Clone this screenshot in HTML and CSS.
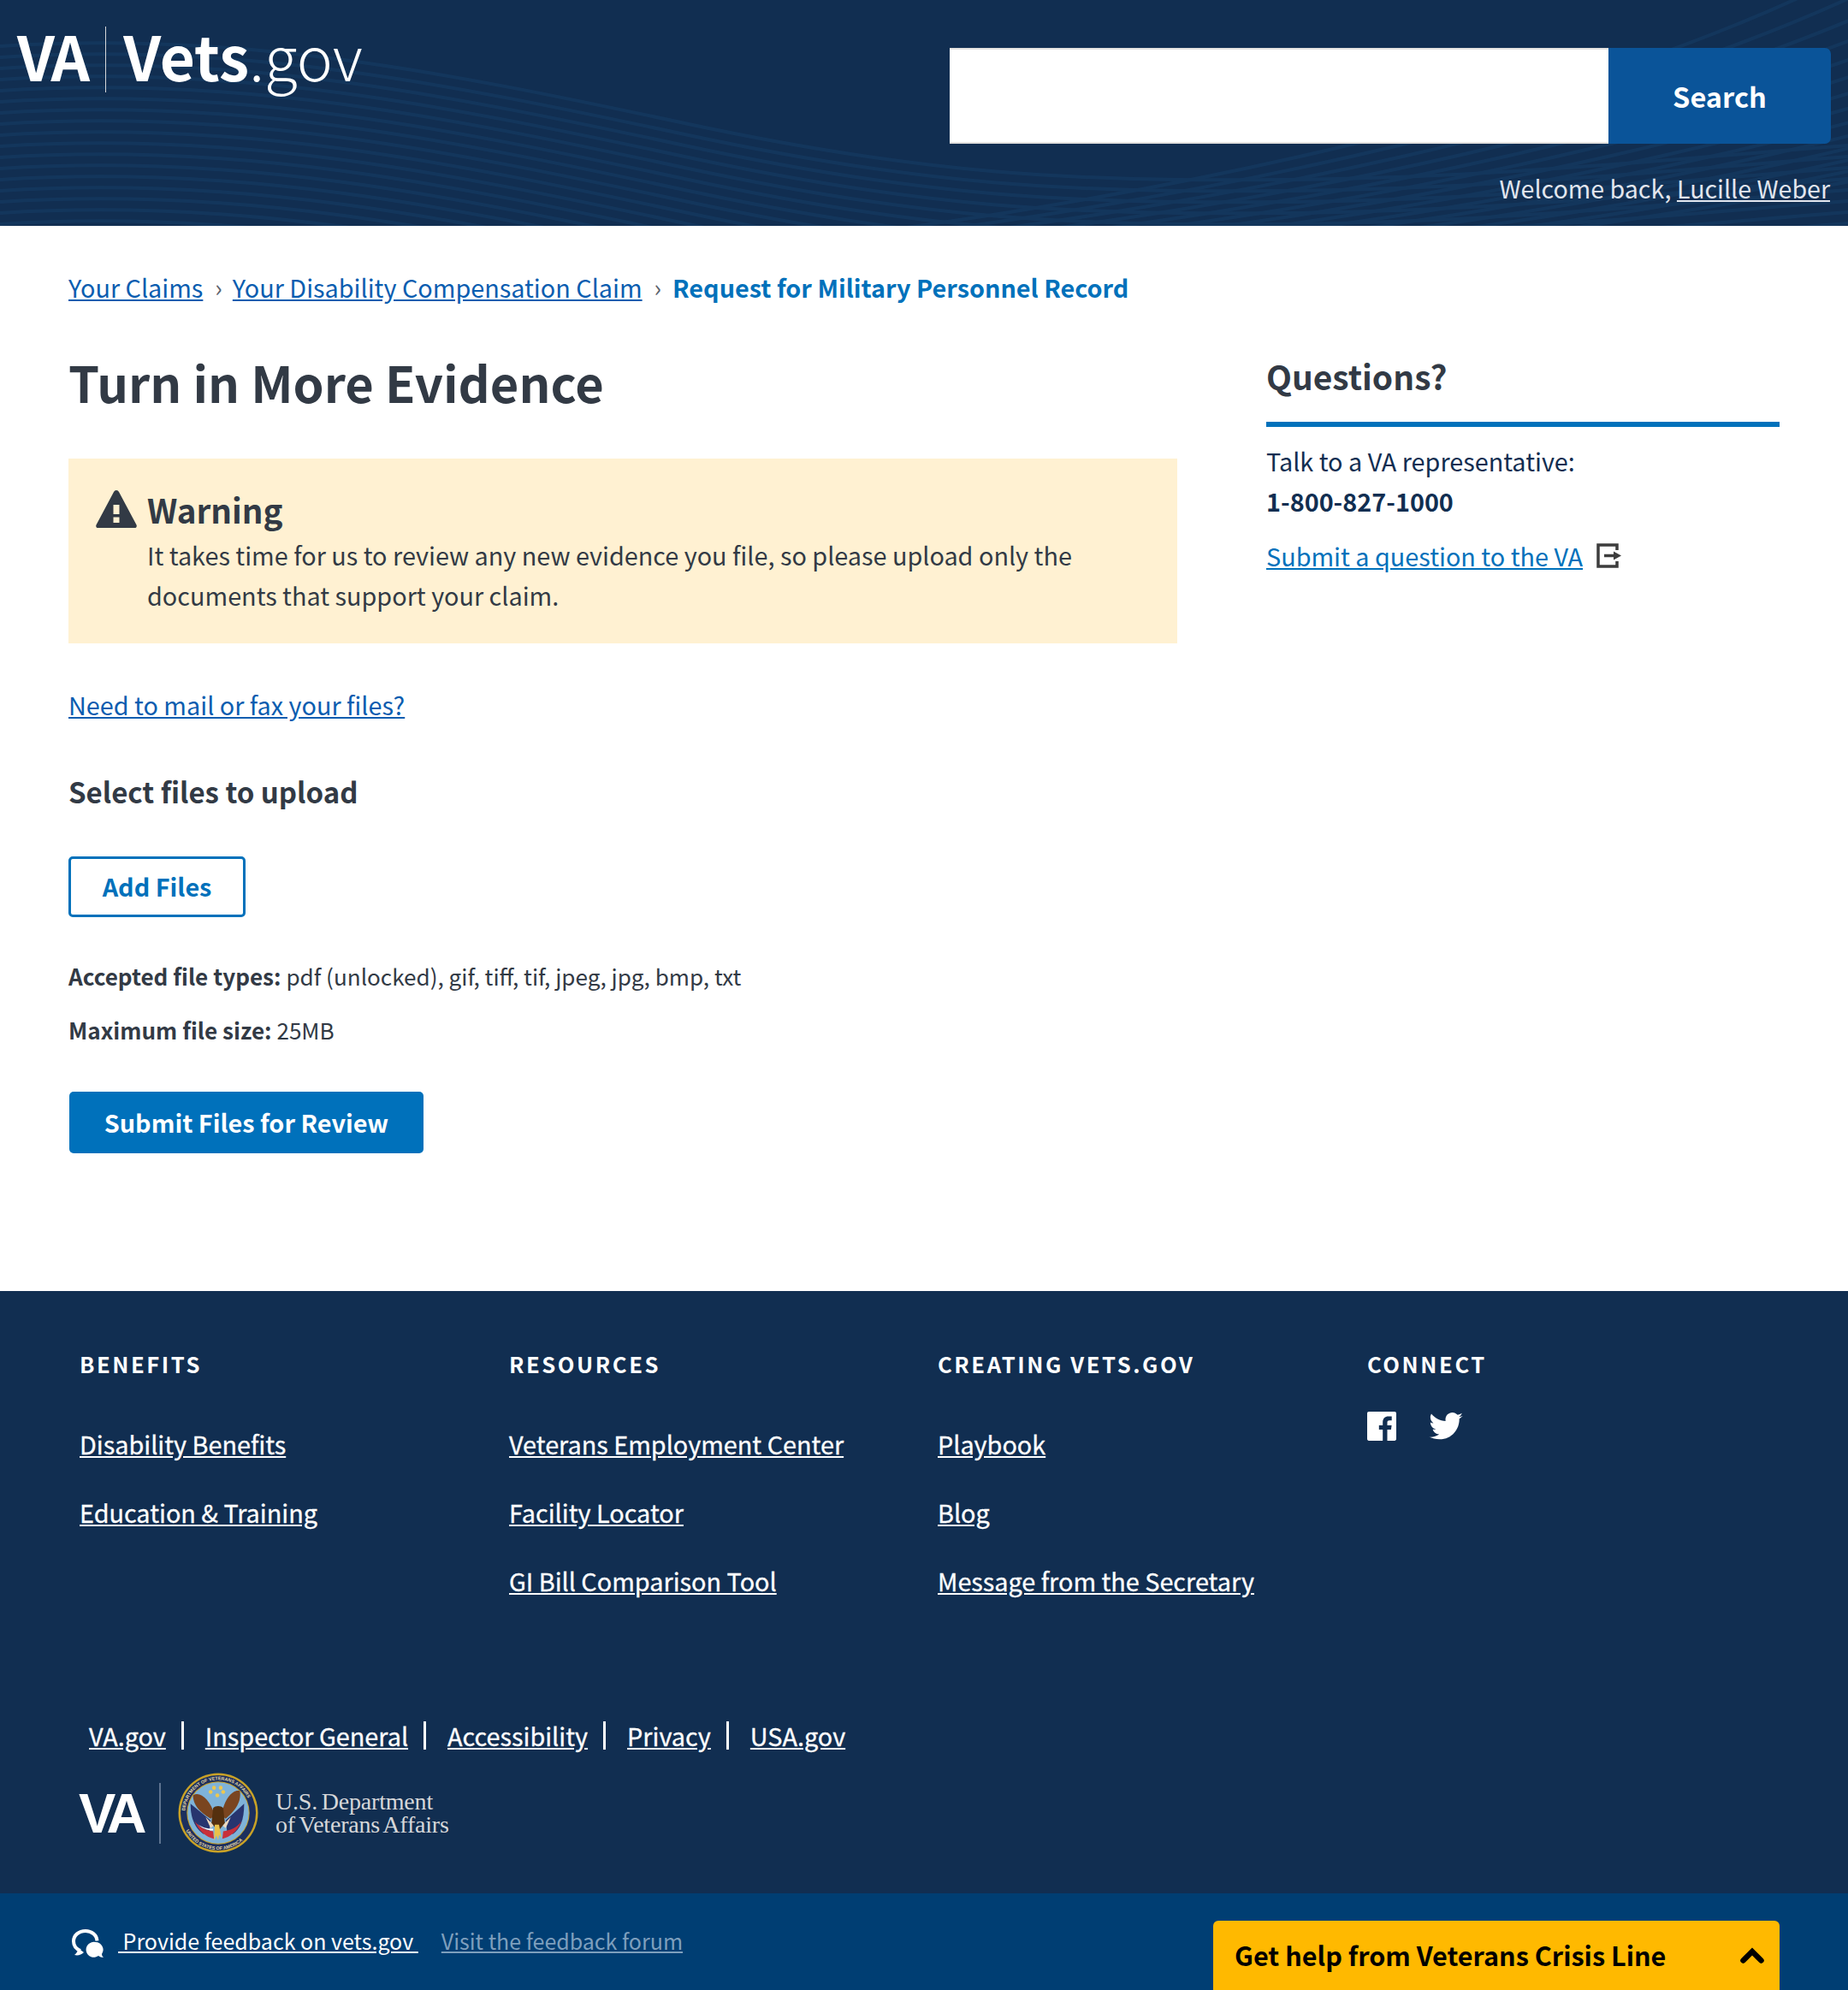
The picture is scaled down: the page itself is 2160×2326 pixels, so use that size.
FILE: index.html
```html
<!DOCTYPE html>
<html lang="en">
<head>
<meta charset="utf-8">
<title>Turn in More Evidence - Vets.gov</title>
<link rel="stylesheet" href="styles.css">
</head>
<body>
<header class="masthead">
  <svg class="waves" width="2160" height="264" viewBox="0 0 2160 264" aria-hidden="true">
    <defs>
      <path id="wave" d="M0 80C280 62 520 110 800 170S1250 238 1500 236 2000 208 2160 196"/>
      <path id="arc" d="M860 290C1250 250 1800 150 2160 -30"/>
    </defs>
    <g class="wave-lines">
      <use href="#wave"/><use href="#wave" y="13"/><use href="#wave" y="26"/><use href="#wave" y="39"/><use href="#wave" y="52"/><use href="#wave" y="65"/><use href="#wave" y="78"/><use href="#wave" y="91"/><use href="#wave" y="104"/><use href="#wave" y="117"/><use href="#wave" y="130"/><use href="#wave" y="143"/><use href="#wave" y="156"/><use href="#wave" y="169"/><use href="#wave" y="182"/><use href="#wave" y="-13"/><use href="#wave" y="-26"/>
      <use href="#arc"/><use href="#arc" x="60"/><use href="#arc" x="120"/><use href="#arc" x="180"/><use href="#arc" x="240"/><use href="#arc" x="300"/><use href="#arc" x="360"/><use href="#arc" x="420"/><use href="#arc" x="480"/><use href="#arc" x="540"/><use href="#arc" x="600"/><use href="#arc" x="660"/><use href="#arc" x="720"/><use href="#arc" x="780"/>
    </g>
  </svg>
  <a class="logo" href="#"><span class="logo-va">VA</span><span class="logo-rule"></span><span class="logo-vets">Vets</span><span class="logo-gov">.gov</span></a>
  <div class="masthead-right">
    <form class="search">
      <input class="search-input" type="text" aria-label="Search">
      <button class="search-button" type="button">Search</button>
    </form>
    <p class="welcome">Welcome back, <a href="#">Lucille Weber</a></p>
  </div>
</header>

<main class="page">
  <nav class="crumbs">
    <a href="#">Your Claims</a><span class="crumb-sep">›</span><a href="#">Your Disability Compensation Claim</a><span class="crumb-sep">›</span><a class="crumb-current" href="#">Request for Military Personnel Record</a>
  </nav>
  <div class="columns">
    <section class="content">
      <h1 class="title">Turn in More Evidence</h1>
      <div class="alert">
        <svg class="alert-icon" width="48" height="44" viewBox="0 0 48 44" aria-hidden="true"><path class="icon-dark" fill-rule="evenodd" d="M24 0c1.400 0 2.300.7 3 2l20.500 38.500c.8 1.600-.2 3.500-2 3.500H2.500c-1.800 0-2.800-1.900-2-3.500L21 2c.7-1.300 1.600-2 3-2zM20.500 17v11h7V17zm0 14.500V38h7v-6.500z"/></svg>
        <div class="alert-body">
          <h2 class="alert-title">Warning</h2>
          <p class="alert-text">It takes time for us to review any new evidence you file, so please upload only the documents that support your claim.</p>
        </div>
      </div>
      <p class="mail-link"><a href="#">Need to mail or fax your files?</a></p>
      <h3 class="upload-title">Select files to upload</h3>
      <button class="btn-outline" type="button">Add Files</button>
      <p class="file-note"><b>Accepted file types:</b> pdf (unlocked), gif, tiff, tif, jpeg, jpg, bmp, txt</p>
      <p class="file-note file-note-2"><b>Maximum file size:</b> 25MB</p>
      <button class="btn-primary" type="button">Submit Files for Review</button>
    </section>
    <aside class="side">
      <h4 class="side-title">Questions?</h4>
      <p class="side-text">Talk to a VA representative:</p>
      <p class="side-phone">1-800-827-1000</p>
      <p class="side-link"><a href="#">Submit a question to the VA</a>
        <svg class="ext-icon" width="29" height="29" viewBox="0 0 29 29" aria-hidden="true"><path class="ext-stroke" d="M24 8V2H2v25h22v-6M9 14.500h12"/><path class="ext-arrow" d="M20 9.500l9 5-9 5z"/></svg>
      </p>
    </aside>
  </div>
</main>

<footer class="footer">
  <div class="footer-grid">
    <div class="footer-col">
      <h5 class="footer-head">BENEFITS</h5>
      <a href="#">Disability Benefits</a>
      <a href="#">Education &amp; Training</a>
    </div>
    <div class="footer-col">
      <h5 class="footer-head">RESOURCES</h5>
      <a href="#">Veterans Employment Center</a>
      <a href="#">Facility Locator</a>
      <a href="#">GI Bill Comparison Tool</a>
    </div>
    <div class="footer-col">
      <h5 class="footer-head">CREATING VETS.GOV</h5>
      <a href="#">Playbook</a>
      <a href="#">Blog</a>
      <a href="#">Message from the Secretary</a>
    </div>
    <div class="footer-col">
      <h5 class="footer-head footer-head-connect">CONNECT</h5>
      <div class="social">
        <svg width="34" height="34" viewBox="0 0 34 34" aria-hidden="true"><path class="icon-white" d="M1.900 0h30.200C33.200 0 34 .8 34 1.900v30.200c0 1.100-.8 1.900-1.900 1.900h-8.600V21h4.400l.7-5.100h-5.100v-3.200c0-1.500.4-2.500 2.500-2.500h2.700V5.600c-.5-.1-2.100-.2-3.900-.2-3.900 0-6.600 2.400-6.600 6.800v3.700h-4.400V21h4.400v13H1.900C.8 34 0 33.200 0 32.100V1.900C0 .8.800 0 1.900 0z"/></svg>
        <svg class="twitter" width="40" height="33" viewBox="0 0 24 20" aria-hidden="true"><path class="icon-white" d="M24 2.400c-.9.400-1.800.7-2.800.8 1-.6 1.800-1.600 2.200-2.700-1 .6-2 1-3.100 1.200C19.300.7 18 0 16.600 0c-2.700 0-4.900 2.200-4.900 4.900 0 .4 0 .8.100 1.100C7.700 5.800 4.100 3.900 1.700.9c-.4.700-.7 1.600-.7 2.500 0 1.700.9 3.200 2.200 4.100-.8 0-1.600-.2-2.200-.6v.1c0 2.400 1.700 4.400 3.900 4.800-.4.100-.8.200-1.300.2-.3 0-.6 0-.9-.1.600 2 2.400 3.400 4.600 3.400-1.700 1.300-3.800 2.100-6.100 2.100-.4 0-.8 0-1.200-.1C2.200 18.200 4.800 19 7.500 19c9.100 0 14-7.500 14-14v-.6c1-.7 1.800-1.500 2.500-2z"/></svg>
      </div>
    </div>
  </div>
  <nav class="legal">
    <a href="#">VA.gov</a><span class="legal-bar"></span><a href="#">Inspector General</a><span class="legal-bar"></span><a href="#">Accessibility</a><span class="legal-bar"></span><a href="#">Privacy</a><span class="legal-bar"></span><a href="#">USA.gov</a>
  </nav>
  <div class="va-brand">
    <span class="brand-va">VA</span>
    <span class="brand-rule"></span>
    <svg class="seal" width="94" height="94" viewBox="0 0 96 96" aria-hidden="true">
      <defs><path id="ring-top" d="M8.500 48a39.500 39.500 0 0 1 79 0"/><path id="ring-bottom" d="M4 48a44 44 0 0 0 88 0"/></defs>
      <circle cx="48" cy="48" r="47.500" fill="#c9a227"/>
      <circle cx="48" cy="48" r="45" fill="#1c2f5e"/>
      <circle cx="48" cy="48" r="37.500" fill="#c9a227"/>
      <circle cx="48" cy="48" r="36.500" fill="#7fb3d9"/>
      <text class="seal-text"><textPath href="#ring-top" startOffset="2%">DEPARTMENT OF VETERANS AFFAIRS</textPath></text>
      <text class="seal-text"><textPath href="#ring-bottom" startOffset="16%">UNITED STATES OF AMERICA</textPath></text>
      <path fill="#27356f" d="M15 37l24 20-2 16-7 0c-8-6-15-16-15-36z"/>
      <path fill="#27356f" d="M79 37L57 57l2 16 7 0c8-6 13-16 13-36z"/>
      <path fill="#c8303a" d="M20 58c6 8 14 11 22 12l1 9c-9-2-18-9-23-21z"/>
      <path fill="#fff" d="M23 61c5 4 11 6 19 6v2c-7 0-14-3-19-8z"/>
      <path fill="#c8303a" d="M76 58c-6 8-14 11-22 12l-1 9c9-2 18-9 23-21z"/>
      <path fill="#ecd9c0" d="M33 53l10 10-4 3zM63 53L53 63l4 3z"/>
      <path fill="#7a4520" d="M18 27c8-5 20 4 26 24l-5 4c-9-6-21-14-21-28z"/>
      <path fill="#7a4520" d="M74 22c-7-3-19 8-22 29l5 4c9-8 19-18 17-33z"/>
      <path fill="#55300f" d="M42 42c3-3 9-3 12 0l2 18-8 10-8-10z"/>
      <path fill="#e9c24a" d="M44 62h5l3 16-3-4-1 7-2-6-3 6z"/>
      <circle cx="43" cy="18" r="2.300" fill="#eec84e"/><circle cx="51" cy="18" r="2.300" fill="#eec84e"/><circle cx="39" cy="23" r="2.300" fill="#eec84e"/><circle cx="54" cy="23" r="2.300" fill="#eec84e"/><circle cx="47" cy="27" r="2.300" fill="#eec84e"/>
    </svg>
    <span class="brand-name">U.S. Department<br>of Veterans Affairs</span>
  </div>
</footer>

<div class="feedback">
  <svg class="feedback-icon" width="38" height="34" viewBox="0 0 38 34" aria-hidden="true"><path class="feedback-ring" d="M29.500 13.500C29 6.500 23 2 16 2 8 2 2 7 2 14c0 5 3 9 8 11"/><path class="icon-white" d="M3 30c4 1 8 0 11-3l-7-5c0 3-1 6-4 8zM27.500 15a9 9 0 0 1 7.500 14c0 1.500.8 3 2 4-2.500 0-4.500-.8-6-2a9 9 0 1 1-3.500-16z"/></svg>
  <a class="feedback-main" href="#">&nbsp;Provide feedback on vets.gov&nbsp;</a>
  <a class="feedback-forum" href="#">Visit the feedback forum</a>
  <div class="crisis">
    <span class="crisis-text">Get help from Veterans Crisis Line</span>
    <svg class="crisis-chevron" width="28" height="19" viewBox="0 0 28 19" aria-hidden="true"><path d="M3.500 15.500L14 5l10.500 10.500"/></svg>
  </div>
</div>
</body>
</html>
```

FILE: styles.css
```css
* { box-sizing: border-box; }
html, body { margin: 0; padding: 0; }
body {
  font-family: "Noto Sans CJK SC", "Noto Sans", sans-serif;
  font-size: 28.800px;
  line-height: 47px;
  color: #323a45;
  background: #fff;
  width: 2160px;
  height: 2326px;
  overflow: hidden;
}
p, h1, h2, h3, h4, h5 { margin: 0; }
a { color: #0071bb; }

/* masthead */
.masthead {
  position: relative;
  display: flex;
  justify-content: space-between;
  height: 264px;
  padding: 0 20px 0 20px;
  background: #112e51;
  overflow: hidden;
}
.waves { position: absolute; left: 0; top: 0; }
.wave-lines { fill: none; stroke: #1a4a78; stroke-width: 4; opacity: .3; }
.logo {
  position: relative;
  display: flex;
  align-items: center;
  height: 77px;
  margin-top: 31px;
  color: #fff;
  text-decoration: none;
  font-size: 71px;
  line-height: 71px;
}
.logo-va { font-weight: 700; letter-spacing: -3px; margin-top: -10px; }
.logo-rule { width: 1px; height: 77px; margin: 0 20px 0 21px; background: #d6d7d9; }
.logo-vets { font-weight: 700; margin-top: -10px; }
.logo-gov { font-weight: 300; margin-top: -10px; }
.masthead-right { position: relative; width: 1030px; padding-top: 56px; }
.search { display: flex; height: 112px; margin: 0; }
.search-input {
  width: 770px;
  border: 0;
  border-top: 2px solid #e4e2e0;
  border-bottom: 2px solid #e4e2e0;
  background: #fff;
  border-radius: 0;
  padding: 0;
}
.search-button {
  flex: 1;
  border: 0;
  border-radius: 0 7px 7px 0;
  background: #0a5499;
  color: #fff;
  font: 700 32.600px/47px "Noto Sans CJK SC", "Noto Sans", sans-serif;
  padding: 0 0 1px;
}
.welcome {
  margin-top: 28px;
  padding-right: 1px;
  text-align: right;
  color: #e2e6ee;
  font-size: 28.600px;
  line-height: 47px;
}
.welcome a { color: #e2e6ee; }

/* main */
.page { padding: 48px 80px 0; height: 1245px; }
.crumbs { display: flex; align-items: center; line-height: 47px; height: 47px; }
.crumbs a { color: #0a5db0; }
.crumb-sep { margin: 0 12px 0 14px; color: #5b616b; font-size: 28px; }
.crumbs .crumb-current { margin-left: 1px; color: #0071bb; font-weight: 700; text-decoration: none; }
.columns { display: flex; justify-content: space-between; }
.content { width: 1296px; }
.title { margin-top: 51px; font-size: 57.800px; line-height: 72px; font-weight: 700; color: #323a45; }
.alert {
  display: flex;
  margin-top: 54px;
  height: 216px;
  padding: 36px 32px 0;
  background: #fff1d2;
}
.alert-icon { flex: none; margin: 1px 12px 0 0; }
.alert-title { font-size: 38.600px; line-height: 47px; font-weight: 700; }
.alert-text { margin-top: 6px; }
.mail-link { margin-top: 48px; }
.mail-link a { color: #0a5db0; }
.upload-title { margin-top: 55px; font-size: 33px; line-height: 47px; font-weight: 700; }
.btn-outline {
  display: block;
  width: 207px;
  height: 71px;
  margin-top: 52px;
  padding: 0 0 2px;
  border: 3px solid #0071bb;
  border-radius: 5px;
  background: #fff;
  color: #0071bb;
  font: 700 28.800px/47px "Noto Sans CJK SC", "Noto Sans", sans-serif;
}
.file-note { margin-top: 46px; font-size: 26.100px; line-height: 47px; }
.file-note-2 { margin-top: 16px; }
.btn-primary {
  display: block;
  width: 414px;
  height: 72px;
  margin: 48px 0 0 1px;
  padding: 0 0 1px;
  border: 0;
  border-radius: 5px;
  background: #0071bb;
  color: #fff;
  font: 700 28.800px/47px "Noto Sans CJK SC", "Noto Sans", sans-serif;
}
.side { width: 600px; padding-top: 1px; }
.side-title {
  margin-top: 49px;
  height: 90px;
  border-bottom: 6px solid #0071bb;
  font-size: 38.900px;
  line-height: 60px;
  font-weight: 700;
}
.side-text { margin-top: 16px; color: #112e51; }
.side-phone { color: #112e51; font-weight: 700; }
.side-link { margin-top: 17px; display: flex; align-items: center; }
.ext-icon { margin: -1px 0 0 16px; }
.ext-stroke { fill: none; stroke: #3d3d3d; stroke-width: 3.500; }
.ext-arrow { fill: #3d3d3d; }

/* footer */
.footer { height: 704px; padding: 61px 80px 0 93px; background: #112e51; color: #fff; }
.footer a { color: #fff; -webkit-text-stroke: .3px #fff; }
.footer-grid { display: grid; grid-template-columns: 502px 501px 502px 1fr; height: 435px; }
.footer-col { display: flex; flex-direction: column; align-items: flex-start; }
.footer-col a { line-height: 47px; margin-bottom: 33px; }
.footer-head { font-size: 25.600px; line-height: 47px; letter-spacing: 2.560px; font-weight: 700; margin-bottom: 47px; }
.footer-head-connect { margin-bottom: 33px; }
.social { display: flex; align-items: center; gap: 38px; }
.icon-white { fill: #fff; }
.icon-dark { fill: #323a45; }
.legal { display: flex; align-items: center; height: 47px; margin-left: 11px; }
.legal a { line-height: 47px; }
.legal-bar { width: 3px; height: 33px; margin: 0 25px 0 18px; background: #fff; }
.va-brand { display: flex; align-items: center; height: 96px; margin-top: 19px; }
.brand-va { margin-left: -1px; font-family: "Liberation Sans", sans-serif; font-size: 65px; font-weight: 700; letter-spacing: -6px; color: #fff; line-height: 65px; width: 94px; }
.brand-rule { width: 2px; height: 71px; margin-right: 20px; background: #5d7390; }
.seal { margin-right: 20px; }
.seal-text { font: 700 5.500px "Liberation Sans", sans-serif; fill: #e4d9a8; }
.brand-name { font-family: "Liberation Serif", serif; font-size: 28px; line-height: 27px; letter-spacing: -.2px; word-spacing: -2px; color: #d6d7d9; }

/* feedback */
.feedback {
  display: flex;
  align-items: flex-start;
  position: relative;
  height: 113px;
  padding: 35px 80px 0 84px;
  background: #003e73;
  font-size: 25px;
  line-height: 40px;
}
.feedback-icon { flex: none; margin: 7px 0 0; }
.feedback-ring { fill: none; stroke: #fff; stroke-width: 4; }
.feedback .feedback-main { margin-left: 16px; color: #fff; }
.feedback .feedback-forum { margin-left: 27px; color: #7e9fbd; }
.crisis {
  position: absolute;
  right: 80px;
  bottom: 0;
  display: flex;
  align-items: center;
  justify-content: space-between;
  width: 662px;
  height: 81px;
  padding: 0 18px 0 25px;
  background: #ffb900;
  border-radius: 6px 6px 0 0;
  color: #000;
  font-size: 30.600px;
  line-height: 47px;
  font-weight: 700;
}
.crisis-chevron { fill: none; stroke: #000; stroke-width: 6.500; stroke-linecap: round; }
```
